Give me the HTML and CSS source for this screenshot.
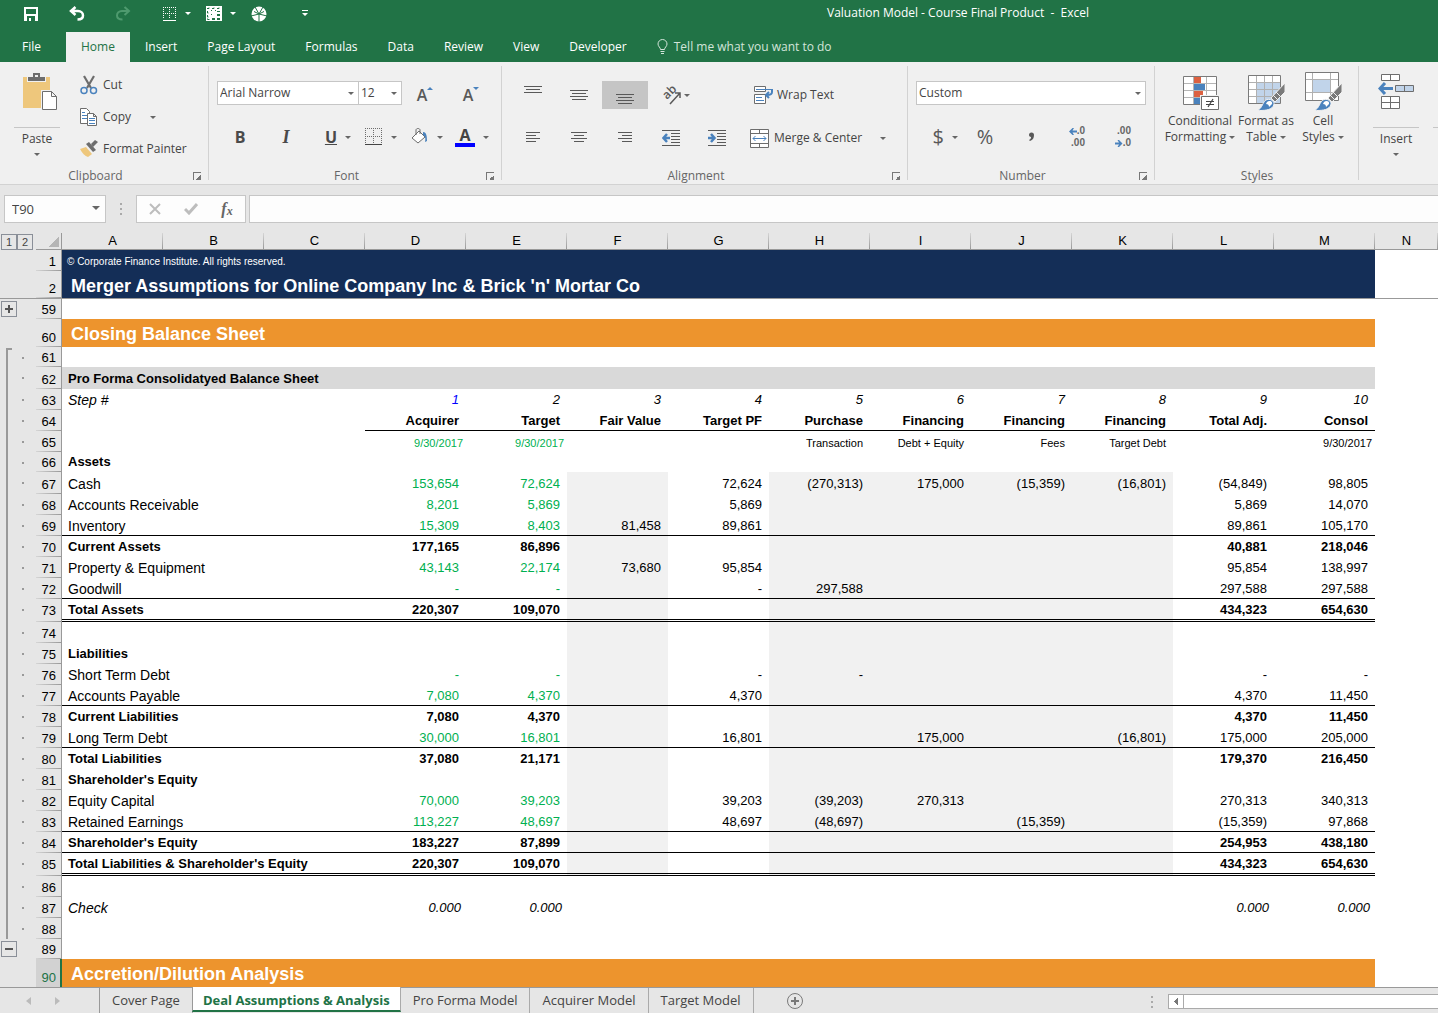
FILE: index.html
```
<!DOCTYPE html>
<html lang="en">

<head>
    <meta charset="UTF-8" />
    <meta name="viewport" content="width=device-width, initial-scale=1.0" />
    <title>Valuation Model - Course Final Product - Excel</title>
    <link rel="stylesheet" href="styles.css">
</head>

<body>
    <header class="titlebar">
        <div class="titlebar-top">
            <div class="quick-access">
                <button class="qa-btn" aria-label="Save">
                    <svg width="16" height="16" viewBox="0 0 16 16"><path fill="#fff" fill-rule="evenodd" d="M1 1h14v14H1zM3 3v5h10V3zM4 10v5h2v-3h2v3h4v-5z"/></svg>
                </button>
                <button class="qa-btn" aria-label="Undo">
                    <svg width="16" height="16" viewBox="0 0 16 16" fill="none" stroke="#fff" stroke-width="2.500"><path d="M6.500 1 2 5l4.500 4M2 5h7c3 0 5 2 5 4.500s-2 4-5.500 4"/></svg>
                </button>
                <button class="qa-btn" aria-label="Redo">
                    <svg width="16" height="16" viewBox="0 0 16 16" fill="none" stroke="#4e9a6e" stroke-width="2"><path d="m9.500 1 4.500 4-4.500 4M14 5H7C4 5 2 7 2 9.500s2 4 5.500 4"/></svg>
                </button>
                <button class="qa-btn qa-split" aria-label="Borders">
                    <svg width="14" height="14" viewBox="0 0 14 14" stroke="#fff" fill="none"><path stroke-dasharray="1 1" d="M0 .5h13M0 6.500h13M.5 0v12M6.500 0v12M12.500 0v12"/><path d="M0 13.500h13"/></svg>
                    <span class="caret caret-light"></span>
                </button>
                <button class="qa-btn qa-split" aria-label="Table">
                    <svg width="16" height="15" viewBox="0 0 16 15"><path fill="#fff" d="M0 0h16v15H0z"/><path fill="none" stroke="#217346" d="M1 2.500h2v-1M6 2.500h2v-1M11 2.500h2v-1M1.500 5v2h1M1.500 9v2h1M1.500 12.500v1h2"/><path fill="#217346" d="M6 12h3v2H6zM11 12h3v2h-3zM11 8h3v2h-3zM11 5h3v1h-3zM5 4h1v1H5zM9 4h1v1H9zM5 8h1v1H5z"/></svg>
                    <span class="caret caret-light"></span>
                </button>
                <button class="qa-btn" aria-label="Macros">
                    <svg width="16" height="16" viewBox="0 0 16 16"><circle cx="8" cy="8" r="7.500" fill="#fff"/><path fill="none" stroke="#217346" d="M8 8 4 1M8 8l4-7M8 8l8 2M8 8v8M8 8l-8 2M3 5.500l5 2.500 5-2.500"/></svg>
                </button>
                <button class="qa-btn" aria-label="Customize toolbar">
                    <svg width="7" height="7" viewBox="0 0 7 7" fill="#fff"><path d="M0 0h6v1H0zM0 3h6L3 6z"/></svg>
                </button>
            </div>
            <div class="window-title">Valuation Model - Course Final Product&nbsp; -&nbsp; Excel</div>
        </div>
        <nav class="ribbon-tabs">
            <a href="#" class="file-tab">File</a>
            <a href="#" class="active">Home</a>
            <a href="#">Insert</a>
            <a href="#">Page Layout</a>
            <a href="#">Formulas</a>
            <a href="#">Data</a>
            <a href="#">Review</a>
            <a href="#">View</a>
            <a href="#">Developer</a>
            <a href="#" class="tell-me">
                <svg width="11" height="15" viewBox="0 0 11 15" fill="none" stroke="#d3e5da"><path d="M3.500 10.500c0-2-2.500-3-2.500-5.500a4.500 4.500 0 0 1 9 0c0 2.500-2.500 3.500-2.500 5.500zM3.500 12.500h4M4 14.500h3"/></svg>
                Tell me what you want to do
            </a>
        </nav>
    </header>

    <div class="ribbon">
        <section class="group group-clipboard">
            <div class="group-body">
                <button class="big-btn paste-btn">
                    <svg width="36" height="40" viewBox="0 0 36 40"><path fill="#eec77c" d="M1 5h27v31H1z"/><path fill="#f0f0f0" d="M5 4h19v6H5z"/><path fill="#6d6d6d" d="M6 5h5V1h7v4h5v4H6z"/><path fill="#f0f0f0" d="M13 3h3v2h-3z"/><path fill="#fff" stroke="#f0f0f0" stroke-width="3" d="M20.500 19.500h9l5 5v13h-14z"/><path fill="#fff" stroke="#6d6d6d" d="M20.500 19.500h9l5 5v13h-14zM29.500 19.500v5h5"/></svg>
                    <span class="big-label">Paste</span>
                    <span class="caret"></span>
                </button>
                <div class="stack">
                    <button class="text-btn">
                        <svg width="18" height="20" viewBox="0 0 18 20" fill="none"><path stroke="#6d6d6d" stroke-width="2.200" d="m4 1 7 12M14 1 7 13"/><circle cx="4" cy="15.500" r="3" stroke="#4a82bd" stroke-width="1.500"/><circle cx="13.500" cy="15.500" r="3" stroke="#4a82bd" stroke-width="1.500"/></svg>
                        Cut
                    </button>
                    <button class="text-btn copy-btn">
                        <svg width="18" height="19" viewBox="0 0 18 19" fill="#fff" stroke="#6d6d6d"><path d="M.5.5h6l3 3v12h-9z"/><path stroke="#4a82bd" d="M2 4.500h3M2 7.500h5M2 10.500h5"/><path d="M7.500 5.500h6l3 3v9h-9zM13.500 5.500v3h3"/><path stroke="#4a82bd" d="M9 10.500h6M9 12.500h6M9 15.500h6"/></svg>
                        Copy
                        <span class="caret"></span>
                    </button>
                    <button class="text-btn">
                        <svg width="18" height="18" viewBox="0 0 18 18"><path fill="#eec77c" d="m0 9 6-2 6 7-4 3c-3-1-6-4-8-8z"/><path fill="#6d6d6d" d="m6 4 3-2 7 8-3 2z"/><path fill="#6d6d6d" d="m11 4 4-4 3 2-5 5z"/></svg>
                        Format Painter
                    </button>
                </div>
            </div>
            <div class="group-label">Clipboard<button class="launcher" aria-label="Clipboard settings"></button></div>
        </section>

        <section class="group group-font">
            <div class="group-body rows">
                <div class="row">
                    <label class="combo font-name"><select aria-label="Font"><option>Arial Narrow</option></select><span class="caret"></span></label>
                    <label class="combo font-size"><select aria-label="Font size"><option>12</option></select><span class="caret"></span></label>
                    <button class="tool size-btn" aria-label="Increase font size">
                        A<svg width="6" height="16" viewBox="0 0 6 16"><path fill="#4a82bd" d="M0 3h6L3 0z"/></svg>
                    </button>
                    <button class="tool size-btn" aria-label="Decrease font size">
                        A<svg width="6" height="16" viewBox="0 0 6 16"><path fill="#4a82bd" d="M0 0h6L3 3z"/></svg>
                    </button>
                </div>
                <div class="row">
                    <button class="tool letter">B</button>
                    <button class="tool letter italic">I</button>
                    <button class="tool split letter"><u>U</u><span class="caret"></span></button>
                    <button class="tool split" aria-label="Borders">
                        <svg width="18" height="18" viewBox="0 0 18 18" fill="none" stroke="#6d6d6d"><path stroke-dasharray="1 1" d="M0 .5h17M0 8.500h17M.5 0v16M8.500 0v16M16.500 0v16"/><path stroke="#444" d="M0 16.500h17"/></svg>
                        <span class="caret"></span>
                    </button>
                    <button class="tool split" aria-label="Fill color">
                        <svg width="18" height="18" viewBox="0 0 18 18"><path fill="#fff" stroke="#6d6d6d" d="m1 10 7-7 6 6-7 6z"/><path fill="none" stroke="#6d6d6d" d="M5 7V2c0-2 4-2 4 0v4"/><path fill="#4a82bd" d="M12 4c3 0 4 3 4 9l-2 1c1-4 0-6-2-7z"/></svg>
                        <span class="caret"></span>
                    </button>
                    <button class="tool split" aria-label="Font color">
                        <span class="font-color">A</span>
                        <span class="caret"></span>
                    </button>
                </div>
            </div>
            <div class="group-label">Font<button class="launcher" aria-label="Font settings"></button></div>
        </section>

        <section class="group group-alignment">
            <div class="group-body align-grid">
                <button class="tool" aria-label="Top align"><svg width="18" height="18" viewBox="0 0 18 18" stroke="#595959"><path d="M0 .5h18M2 3.500h14M0 6.500h18"/></svg></button>
                <button class="tool" aria-label="Middle align"><svg width="18" height="18" viewBox="0 0 18 18" stroke="#595959"><path d="M0 4.500h18M2 7.500h14M0 10.500h18M2 13.500h14"/></svg></button>
                <button class="tool selected" aria-label="Bottom align"><svg width="18" height="18" viewBox="0 0 18 18" stroke="#595959"><path d="M0 8.500h18M2 11.500h14M0 14.500h18M2 17.500h14"/></svg></button>
                <button class="tool split orientation" aria-label="Orientation">
                    <svg width="22" height="20" viewBox="0 0 22 20" fill="none" stroke="#595959" stroke-width="1.500"><text transform="translate(7 15) rotate(-45)" stroke="none">ab</text><path d="m10 19 10-11M15 8h5v5"/></svg>
                    <span class="caret"></span>
                </button>
                <button class="text-btn wrap-btn">
                    <svg width="20" height="19" viewBox="0 0 20 19"><path fill="#fff" stroke="#6d6d6d" d="M.5.500h11v5H.5zM.5 8.500h11v9H.5z"/><path fill="none" stroke="#4a82bd" d="M2 3.500h16M2 11.500h6M2 14.500h8"/><path fill="none" stroke="#4a82bd" stroke-width="2" d="M18 3v3c0 2-1 3-5 3M15 6l-3 3 3 3"/></svg>
                    Wrap Text
                </button>
                <button class="tool" aria-label="Align left"><svg width="16" height="12" viewBox="0 0 16 12" stroke="#595959"><path d="M1 .5h14M1 3.500h10M1 6.500h14M1 9.500h10"/></svg></button>
                <button class="tool" aria-label="Center"><svg width="16" height="12" viewBox="0 0 16 12" stroke="#595959"><path d="M0 .5h16M3 3.500h10M0 6.500h16M3 9.500h10"/></svg></button>
                <button class="tool" aria-label="Align right"><svg width="16" height="12" viewBox="0 0 16 12" stroke="#595959"><path d="M1 .5h14M5 3.500h10M1 6.500h14M5 9.500h10"/></svg></button>
                <button class="tool" aria-label="Decrease indent"><svg width="18" height="18" viewBox="0 0 18 18" fill="none" stroke="#595959"><path d="M0 1.500h18M9 4.500h9M9 7.500h9M9 10.500h9M9 13.500h9M0 16.500h18"/><path stroke="#4a82bd" stroke-width="2.500" d="M8 9H2M5 5 1.500 9 5 13"/></svg></button>
                <button class="tool" aria-label="Increase indent"><svg width="18" height="18" viewBox="0 0 18 18" fill="none" stroke="#595959"><path d="M0 1.500h18M9 4.500h9M9 7.500h9M9 10.500h9M9 13.500h9M0 16.500h18"/><path stroke="#4a82bd" stroke-width="2.500" d="M0 9h6M3 5l3.500 4L3 13"/></svg></button>
                <button class="text-btn merge-btn">
                    <svg width="19" height="19" viewBox="0 0 19 19" fill="#fff" stroke="#6d6d6d"><path d="M.5.500h18v18H.5zM.5 4.500h18M.5 14.500h18M9.500.500v4M9.500 14.500v4"/><path fill="none" stroke="#4a82bd" d="M3 9.500h13M5.500 7 3 9.500 5.500 12M13.500 7 16 9.500 13.500 12"/></svg>
                    Merge &amp; Center
                    <span class="caret"></span>
                </button>
            </div>
            <div class="group-label">Alignment<button class="launcher" aria-label="Alignment settings"></button></div>
        </section>

        <section class="group group-number">
            <div class="group-body rows">
                <div class="row">
                    <label class="combo number-format"><select aria-label="Number format"><option>Custom</option></select><span class="caret"></span></label>
                </div>
                <div class="row">
                    <button class="tool split sign">$<span class="caret"></span></button>
                    <button class="tool sign">%</button>
                    <button class="tool" aria-label="Comma style"><svg width="7" height="10" viewBox="0 0 7 10" fill="#595959"><path d="M1 3a2.500 2.500 0 0 1 5 0c0 3-1 5-4 6l-1-1c2-1 2-2 2-3-1 0-2-1-2-2z"/></svg></button>
                    <button class="tool decimals">
                        <span><svg width="8" height="7" viewBox="0 0 8 7"><path fill="#4a82bd" d="M0 3.500 3.500 0H5L3.500 2.500H8v2H3.500L5 7H3.500z"/></svg>.0</span>
                        <span>.00</span>
                    </button>
                    <button class="tool decimals">
                        <span>.00</span>
                        <span><svg width="8" height="7" viewBox="0 0 8 7"><path fill="#4a82bd" d="M7.500 3.500 4 0H2.500L4 2.500H0v2h4L2.500 7H4z"/></svg>.0</span>
                    </button>
                </div>
            </div>
            <div class="group-label">Number<button class="launcher" aria-label="Number settings"></button></div>
        </section>

        <section class="group group-styles">
            <div class="group-body">
                <button class="style-btn">
                    <svg width="38" height="40" viewBox="0 0 38 40"><path fill="#fff" stroke="#7a7a7a" d="M2.500 4.500h33v28h-33z"/><path stroke="#b5b5b5" d="M3 11.500h32M3 18.500h32M3 25.500h32M12.500 5v27M25.500 5v27"/><path fill="#dc6141" d="M13 5h7v6h-7zM13 19h9v6h-9z"/><path fill="#4a82bd" d="M13 12h11v6H13zM13 26h6v6h-6z"/><path fill="#fff" stroke="#f0f0f0" stroke-width="3" d="M20.500 24.500h17v13h-17z"/><path fill="#fff" stroke="#6d6d6d" d="M20.500 24.500h17v13h-17z"/><path stroke="#444" stroke-width="1.200" d="M25 29.500h8M25 32.500h8M32 27l-5 8"/></svg>
                    <span>Conditional</span>
                    <span>Formatting <i class="caret"></i></span>
                </button>
                <button class="style-btn">
                    <svg width="38" height="40" viewBox="0 0 38 40"><path fill="#fff" stroke="#7a7a7a" d="M1.500 3.500h32v28h-32z"/><path fill="#c1d4ea" d="M10 10h23v21H10z"/><path stroke="#b0b0b0" d="M2 10.500h31M2 17.500h31M2 24.500h31M9.500 4v27M17.500 4v27M25.500 4v27"/><path fill="#7a7a7a" stroke="#f0f0f0" d="M38 11v9L28 30l-4-4z"/><path stroke="#f0f0f0" d="m29 20 5 5M26 23l5 5"/><path fill="#4a82bd" stroke="#f0f0f0" d="M10 38.500c6-2 5-9 10-11 5-1 9 3 6 7-3 4-9 4-16 4z"/><path fill="#fff" d="M20 30c2-2 6-1 5 2l-3 3c0-2-1-3-3-3z"/></svg>
                    <span>Format as</span>
                    <span>Table <i class="caret"></i></span>
                </button>
                <button class="style-btn">
                    <svg width="38" height="40" viewBox="0 0 38 40"><path fill="#fff" stroke="#7a7a7a" d="M1.500.500h33v28h-33z"/><path stroke="#b0b0b0" d="M2 7.500h32M2 20.500h32M8.500 1v27M26.500 1v27"/><path fill="#c1d4ea" d="M9 8h17v12H9z"/><path fill="#7a7a7a" stroke="#f0f0f0" d="M38 11v9L28 30l-4-4z"/><path stroke="#f0f0f0" d="m29 20 5 5M26 23l5 5"/><path fill="#4a82bd" stroke="#f0f0f0" d="M10 38.500c6-2 5-9 10-11 5-1 9 3 6 7-3 4-9 4-16 4z"/><path fill="#fff" d="M20 30c2-2 6-1 5 2l-3 3c0-2-1-3-3-3z"/></svg>
                    <span>Cell</span>
                    <span>Styles <i class="caret"></i></span>
                </button>
            </div>
            <div class="group-label">Styles</div>
        </section>

        <section class="group group-cells">
            <div class="group-body">
                <button class="big-btn">
                    <svg width="36" height="40" viewBox="0 0 36 40" fill="#fff" stroke="#6d6d6d"><path d="M3.500 2.500h18v6h-18zM12.500 2.500v6M3.500 24.500h18v12h-18zM12.500 24.500v12M3.500 30.500h18"/><path fill="#c1d4ea" d="M17.500 13.500h18v6h-18zM26.500 13.500v6"/><path fill="none" stroke="#4a82bd" stroke-width="3" d="M15 16.500H3M7 11l-5 5.500L7 22"/></svg>
                    <span class="big-label">Insert</span>
                    <span class="caret"></span>
                </button>
                <div class="next-btn"></div>
            </div>
        </section>
    </div>

    <div class="formula-bar">
        <label class="name-box"><input type="text" value="T90" aria-label="Name box"><span class="caret"></span></label>
        <span class="grip"></span>
        <div class="formula-tools">
            <button aria-label="Cancel"><svg width="12" height="12" viewBox="0 0 12 12" stroke="#bdbdbd" stroke-width="2"><path d="m1 1 10 10M11 1 1 11"/></svg></button>
            <button aria-label="Enter"><svg width="14" height="12" viewBox="0 0 14 12" fill="none" stroke="#bdbdbd" stroke-width="3"><path d="m1 6 4 4 8-9"/></svg></button>
            <button class="fx">f<small>x</small></button>
        </div>
        <input class="formula-input" type="text" aria-label="Formula">
    </div>

    <main class="sheet">
        <table class="grid">
            <colgroup>
                <col class="col-gutter">
                <col class="col-gutter">
                <col class="col-num">
                <col class="col-data" span="13">
                <col>
            </colgroup>
            <thead>
                <tr id="letters">
                    <td class="level"><button>1</button></td>
                    <td class="level"><button>2</button></td>
                    <td class="corner"></td>
                </tr>
            </thead>
            <tbody id="rows"></tbody>
        </table>
    </main>

    <footer class="sheet-tabs">
        <div class="sheet-nav">
            <button class="nav-prev" aria-label="Previous sheet"></button>
            <button class="nav-next" aria-label="Next sheet"></button>
        </div>
        <nav>
            <a href="#">Cover Page</a>
            <a href="#" class="active">Deal Assumptions &amp; Analysis</a>
            <a href="#">Pro Forma Model</a>
            <a href="#">Acquirer Model</a>
            <a href="#">Target Model</a>
        </nav>
        <button class="add-sheet" aria-label="New sheet">
            <svg width="16" height="16" viewBox="0 0 16 16" fill="none" stroke="#7a7a7a"><circle cx="8" cy="8" r="7.500"/><path stroke-width="2" d="M8 4v8M4 8h8"/></svg>
        </button>
        <span class="grip"></span>
        <div class="scrollbar"><button class="scroll-left" aria-label="Scroll left"></button></div>
    </footer>

    <script src="script.js"></script>
</body>

</html>
```
FILE: styles.css
```
* {
    box-sizing: border-box;
}

body {
    margin: 0;
    min-height: 100vh;
    display: flex;
    flex-direction: column;
    font-family: "Open Sans", "Noto Sans", sans-serif;
    font-size: 12px;
    line-height: 16px;
    color: #444;
    background: #e6e6e6;
    overflow: hidden;
}

button,
select,
input {
    font: inherit;
    color: inherit;
    background: none;
    border: none;
    padding: 0;
    margin: 0;
    outline: none;
    appearance: none;
    border-radius: 0;
}

a {
    color: inherit;
    text-decoration: none;
}

svg {
    display: block;
    flex-shrink: 0;
}

.caret {
    display: inline-block;
    flex-shrink: 0;
    border: 3px solid transparent;
    border-top-color: #666;
    border-bottom: none;
}

.caret-light {
    border-top-color: #fff;
}

/* Title bar */
.titlebar {
    background: #217346;
    color: #fff;
}

.titlebar-top {
    display: flex;
    height: 32px;
}

.quick-access {
    display: flex;
    align-items: center;
    width: 478px;
    height: 27px;
    padding-left: 8px;
}

.qa-btn {
    display: flex;
    justify-content: center;
    align-items: center;
    width: 46px;
}

.qa-split {
    justify-content: flex-end;
    gap: 8px;
    width: 45px;
}

.window-title {
    flex: 1;
    text-align: center;
    padding-top: 5px;
}

.ribbon-tabs {
    display: flex;
    height: 30px;
}

.ribbon-tabs a {
    padding: 7px 15px;
}

.ribbon-tabs .file-tab {
    width: 66px;
    padding-left: 22px;
}

.ribbon-tabs .active {
    background: #f0f0f0;
    color: #217346;
}

.ribbon-tabs .tell-me {
    display: flex;
    gap: 6px;
    color: #d3e5da;
}

/* Ribbon */
.ribbon {
    display: flex;
    height: 123px;
    background: #f0f0f0;
    border-bottom: 1px solid #d2d2d2;
}

.group {
    position: relative;
    flex-shrink: 0;
    display: flex;
    flex-direction: column;
    padding: 0 8px;
}

.group::after {
    content: "";
    position: absolute;
    right: 0;
    top: 4px;
    bottom: 4px;
    width: 1px;
    background: #d2d2d2;
}

.group-clipboard {
    width: 209px;
}

.group-font {
    width: 293px;
}

.group-alignment {
    width: 406px;
}

.group-number {
    width: 247px;
}

.group-styles {
    width: 204px;
}

.group-cells {
    flex: 1;
    overflow: hidden;
    padding-right: 0;
}

.group-cells::after {
    display: none;
}

.group-body {
    display: flex;
    height: 106px;
}

.group-label {
    display: flex;
    justify-content: center;
    color: #666;
    padding-right: 18px;
}

.group-styles .group-label {
    padding-right: 0;
}

.launcher {
    position: absolute;
    right: 8px;
    bottom: 4px;
    width: 8px;
    height: 8px;
    border-left: 1px solid #777;
    border-top: 1px solid #777;
    background: linear-gradient(135deg, transparent 50%, #777 50%) right bottom / 5px 5px no-repeat;
}

.big-btn {
    display: flex;
    flex-direction: column;
    align-items: center;
    width: 46px;
    margin-left: 6px;
    padding-top: 10px;
    flex-shrink: 0;
}

.paste-btn svg {
    margin-left: 6px;
}

.big-label {
    width: 46px;
    margin-top: 15px;
    padding: 3px 0 6px;
    border-top: 1px solid #c6c6c6;
}

.next-btn {
    flex: 1;
    margin-left: 14px;
    margin-top: 65px;
    border-top: 1px solid #c6c6c6;
}

.stack {
    display: flex;
    flex-direction: column;
    margin-left: 20px;
    padding-top: 7px;
}

.text-btn {
    display: flex;
    align-items: center;
    gap: 5px;
    height: 32px;
    white-space: nowrap;
}

.copy-btn .caret {
    margin-left: 14px;
}

.rows {
    flex-direction: column;
    gap: 16px;
    padding-top: 19px;
}

.row {
    display: flex;
    height: 26px;
}

.combo {
    position: relative;
    height: 24px;
    background: #fff;
    border: 1px solid #c6c6c6;
}

.combo select {
    width: 100%;
    height: 22px;
    padding: 0 2px;
}

.combo .caret,
.name-box .caret {
    position: absolute;
    right: 4px;
    top: 10px;
}

.font-name {
    width: 142px;
}

.font-size {
    width: 43px;
    border-left: none;
}

.number-format {
    width: 230px;
}

.tool {
    display: flex;
    justify-content: center;
    align-items: center;
    width: 46px;
    height: 28px;
}

.split {
    justify-content: flex-end;
    gap: 8px;
    padding-right: 4px;
}

.selected {
    background: #c5c5c5;
}

.letter {
    font-size: 16px;
    font-weight: bold;
    color: #4a4a4a;
}

.size-btn {
    font-size: 16px;
    font-weight: 600;
    color: #595959;
}

.font-color {
    width: 20px;
    font-size: 16px;
    font-weight: bold;
    text-align: center;
    border-bottom: 4px solid #00f;
}

.italic {
    font-family: "Liberation Serif", serif;
    font-style: italic;
    font-size: 18px;
}

.align-grid {
    display: grid;
    grid-template-columns: repeat(5, 46px) 1fr;
    grid-template-rows: 28px 28px;
    row-gap: 15px;
    align-content: start;
    padding-top: 19px;
}

.align-grid .split {
    gap: 2px;
}

.orientation svg {
    overflow: visible;
}

.orientation text {
    font-size: 12px;
    font-weight: 600;
    fill: #595959;
}

.align-grid .text-btn {
    height: 28px;
}

.wrap-btn {
    grid-column: 6;
    padding-left: 14px;
}

.align-grid .wrap-btn {
    gap: 3px;
}

.merge-btn {
    padding-left: 10px;
}

.merge-btn .caret {
    margin-left: 13px;
}

.sign {
    font-size: 20px;
    color: #595959;
}

.decimals {
    flex-direction: column;
    align-items: flex-end;
    padding-right: 15px;
    font-family: "Liberation Sans", sans-serif;
    font-size: 10px;
    line-height: 12px;
    font-weight: bold;
    color: #666;
}

.decimals span {
    display: flex;
    align-items: center;
}

.style-btn {
    display: flex;
    flex-direction: column;
    align-items: center;
    width: 74px;
    padding-top: 10px;
    white-space: nowrap;
}

.style-btn svg {
    margin-bottom: 1px;
}

.style-btn:nth-child(2) {
    width: 58px;
}

.style-btn:nth-child(3) {
    width: 56px;
}

.style-btn .caret {
    vertical-align: middle;
}

/* Formula bar */
.formula-bar {
    display: flex;
    height: 48px;
    padding: 10px 0 0 4px;
}

.name-box,
.formula-tools,
.formula-input {
    height: 28px;
    background: #fdfdfd;
    border: 1px solid #c6c6c6;
}

.name-box {
    position: relative;
    width: 102px;
}

.name-box input {
    width: 70px;
    height: 26px;
    padding-left: 7px;
    font-size: 13px;
}

.name-box .caret {
    right: 5px;
    border-width: 4px 4px 0;
}

.grip {
    width: 2px;
    height: 12px;
    margin: 8px 14px;
    background: repeating-linear-gradient(#aaa 0 2px, transparent 2px 5px);
}

.formula-tools {
    display: flex;
    width: 110px;
}

.formula-tools button {
    flex: 1;
    display: flex;
    justify-content: center;
    align-items: center;
}

.formula-tools .fx {
    font-family: "Liberation Serif", serif;
    font-style: italic;
    font-weight: bold;
    font-size: 16px;
    color: #666;
}

.fx small {
    font-size: 12px;
    padding-top: 4px;
}

.formula-input {
    flex: 1;
    margin-left: 3px;
    border-right: none;
}

/* Sheet */
.sheet {
    flex: 1;
    overflow: hidden;
    background: #fff;
}

.grid {
    width: 100%;
    table-layout: fixed;
    border-spacing: 0;
    font-family: "Arial Narrow", "Liberation Sans", sans-serif;
    font-size: 13px;
    line-height: 20px;
    color: #000;
}

.grid td,
.grid th {
    padding: 0;
    font-weight: inherit;
    white-space: nowrap;
    vertical-align: bottom;
}

.col-gutter {
    width: 18px;
}

.col-num {
    width: 26px;
}

.col-data {
    width: 101px;
}

.grid thead td,
.grid thead th {
    height: 17px;
    line-height: 16px;
    background: #e6e6e6;
}

.grid thead th {
    text-align: center;
    border-bottom: 1px solid #999;
    background: linear-gradient(#d5d5d5, #999) right / 1px 100% no-repeat #e6e6e6;
}

.grid thead .corner {
    background: linear-gradient(135deg, transparent 50%, #b5b5b5 50%) 13px 4px / 10px 10px no-repeat #e6e6e6;
    border-right: 1px solid #999;
    border-bottom: 1px solid #999;
}

.grid .level button {
    display: block;
    width: 16px;
    height: 16px;
    margin-left: 1px;
    border: 1px solid #8a8f98;
    font-size: 11px;
    line-height: 14px;
    color: #444;
}

.grid .level + .level button {
    margin-left: -1px;
}

.grid .gutter {
    background-color: #e6e6e6;
    background-repeat: no-repeat;
    vertical-align: top;
}

.toggle {
    display: block;
    width: 16px;
    height: 16px;
    margin: 2px 0 0 1px;
    border: 1px solid #8a8f98;
    background: linear-gradient(#555, #555) center / 8px 2px no-repeat;
}

.toggle.plus {
    background: linear-gradient(#555, #555) center / 8px 2px no-repeat, linear-gradient(#555, #555) center / 2px 8px no-repeat;
}

/* bracket that spans the grouped rows */
.bracket {
    background-image: linear-gradient(#999, #999);
    background-position: 6px 0;
    background-size: 2px 100%;
}

.bracket-start {
    background-image: linear-gradient(#999, #999), linear-gradient(#999, #999);
    background-position: 6px 1px;
    background-size: 2px 100%, 6px 2px;
}

.dot {
    background-image: linear-gradient(#999, #999);
    background-position: 4px 10px;
    background-size: 2px 2px;
}

.grid .num {
    font-style: normal;
    font-weight: normal;
    line-height: 18px;
    text-align: right;
    padding-right: 5px;
    border-right: 1px solid #999;
    background: linear-gradient(to right, #d5d5d5, #999) bottom / 100% 1px no-repeat #e6e6e6;
}

.grid .label {
    padding-left: 6px;
    text-align: left;
    font-size: 14px;
}

.grid .val {
    text-align: right;
    padding-right: 7px;
}

.h20 { height: 20px; }
.h21 { height: 21px; }
.h22 { height: 22px; }
.h23 { height: 23px; }
.h28 { height: 28px; }

.bold {
    font-weight: bold;
}

.grid .bold .label {
    font-size: 13px;
}

.step {
    font-style: italic;
}

.linked .val:nth-child(5),
.linked .val:nth-child(6),
.dates .val:nth-child(5),
.dates .val:nth-child(6) {
    color: #00b050;
}

.step .val:nth-child(5) {
    color: #00f;
}

.check .val:nth-child(5) {
    color: #000;
}

.shaded .val:nth-child(7),
.shaded .val:nth-child(n+9):nth-child(-n+12) {
    background: #f1f1f1;
}

.under .label,
.under .val,
.heads .val {
    border-bottom: 1px solid #000;
    line-height: 18px;
}

.double .label,
.double .val {
    border-bottom: 3px double #000;
    line-height: 18px;
}

.grid .double .num {
    line-height: 22px;
}

.dates .val {
    font-size: 11px;
    line-height: 18px;
}

.grid .dates .val:nth-child(5),
.grid .dates .val:nth-child(6),
.grid .dates .val:nth-child(14) {
    padding-right: 3px;
}

.grid .check .val {
    padding-right: 5px;
}

.notice .label,
.title .label {
    background: #142e57;
    color: #fff;
}

.grid .notice .label {
    padding-left: 5px;
    font-size: 10px;
    line-height: 18px;
}

.title td {
    border-bottom: 1px solid #999;
}

.grid .title .label,
.grid .section .label {
    padding-left: 9px;
    font-size: 18px;
    font-weight: bold;
    line-height: 24px;
}

.grid .section .label {
    background: #ed942d;
    color: #fff;
    line-height: 26px;
}

.grid .subhead .label {
    background: #d9d9d9;
    font-size: 13px;
    font-weight: bold;
}

.grid .current .num {
    background: #d2d2d2;
    color: #217346;
    padding-right: 4px;
    border-right: 2px solid #217346;
}

/* Sheet tabs */
.sheet-tabs {
    display: flex;
    height: 26px;
    font-size: 13px;
    border-top: 1px solid #999;
    background: #e6e6e6;
}

.sheet-nav {
    display: flex;
    justify-content: center;
    align-items: center;
    gap: 24px;
    width: 99px;
    padding-right: 14px;
}

.nav-prev,
.nav-next {
    border: 4px solid transparent;
}

.nav-prev {
    border-right: 5px solid #bbb;
    border-left: none;
}

.nav-next {
    border-left: 5px solid #bbb;
    border-right: none;
}

.sheet-tabs nav {
    display: flex;
    border-left: 1px solid #999;
}

.sheet-tabs nav a {
    padding: 4px 12px;
    border-right: 1px solid #aaa;
}

.sheet-tabs nav .active {
    margin: -1px 0 1px -1px;
    padding: 5px 10px 0;
    background: #fff;
    border-left: 1px solid #999;
    border-bottom: 2px solid #217346;
    color: #217346;
    font-weight: bold;
}

.add-sheet {
    margin-left: 33px;
}

.sheet-tabs .grip {
    margin-left: auto;
    margin-right: 15px;
}

.scrollbar {
    width: 270px;
    height: 15px;
    margin-top: 6px;
    background: #fff;
    border: 1px solid #aaa;
    border-right: none;
}

.scroll-left {
    display: block;
    width: 15px;
    height: 13px;
    border-right: 1px solid #aaa;
    background: conic-gradient(from 45deg at 5px 50%, #777 90deg, transparent 0) 0 2px / 9px 9px no-repeat;
}
```
FILE: script.js
```
const columns = ["A", "B", "C", "D", "E", "F", "G", "H", "I", "J", "K", "L", "M", "N"];

// row number, height, classes, label, values for columns D to M
const rows = [
    [1, 21, "notice", "© Corporate Finance Institute. All rights reserved."],
    [2, 28, "title", "Merger Assumptions for Online Company Inc & Brick 'n' Mortar Co"],
    [59, 20, "", "", []],
    [60, 28, "section", "Closing Balance Sheet"],
    [61, 20, "", "", []],
    [62, 22, "subhead", "Pro Forma Consolidatyed Balance Sheet"],
    [63, 21, "step", "Step #", [1, 2, 3, 4, 5, 6, 7, 8, 9, 10]],
    [64, 21, "heads bold", "", ["Acquirer", "Target", "Fair Value", "Target PF", "Purchase", "Financing", "Financing", "Financing", "Total Adj.", "Consol"]],
    [65, 21, "dates", "", ["9/30/2017", "9/30/2017", "", "", "Transaction", "Debt + Equity", "Fees", "Target Debt", "", "9/30/2017"]],
    [66, 20, "bold", "Assets", []],
    [67, 22, "linked shaded", "Cash", ["153,654", "72,624", "", "72,624", "(270,313)", "175,000", "(15,359)", "(16,801)", "(54,849)", "98,805"]],
    [68, 21, "linked shaded", "Accounts Receivable", ["8,201", "5,869", "", "5,869", "", "", "", "", "5,869", "14,070"]],
    [69, 21, "linked shaded under", "Inventory", ["15,309", "8,403", "81,458", "89,861", "", "", "", "", "89,861", "105,170"]],
    [70, 21, "bold shaded", "Current Assets", ["177,165", "86,896", "", "", "", "", "", "", "40,881", "218,046"]],
    [71, 21, "linked shaded", "Property & Equipment", ["43,143", "22,174", "73,680", "95,854", "", "", "", "", "95,854", "138,997"]],
    [72, 21, "linked shaded under", "Goodwill", ["-", "-", "", "-", "297,588", "", "", "", "297,588", "297,588"]],
    [73, 23, "bold shaded double", "Total Assets", ["220,307", "109,070", "", "", "", "", "", "", "434,323", "654,630"]],
    [74, 21, "shaded", "", []],
    [75, 21, "bold shaded", "Liabilities", []],
    [76, 21, "linked shaded", "Short Term Debt", ["-", "-", "", "-", "-", "", "", "", "-", "-"]],
    [77, 21, "linked shaded under", "Accounts Payable", ["7,080", "4,370", "", "4,370", "", "", "", "", "4,370", "11,450"]],
    [78, 21, "bold shaded", "Current Liabilities", ["7,080", "4,370", "", "", "", "", "", "", "4,370", "11,450"]],
    [79, 21, "linked shaded under", "Long Term Debt", ["30,000", "16,801", "", "16,801", "", "175,000", "", "(16,801)", "175,000", "205,000"]],
    [80, 21, "bold shaded", "Total Liabilities", ["37,080", "21,171", "", "", "", "", "", "", "179,370", "216,450"]],
    [81, 21, "bold shaded", "Shareholder's Equity", []],
    [82, 21, "linked shaded", "Equity Capital", ["70,000", "39,203", "", "39,203", "(39,203)", "270,313", "", "", "270,313", "340,313"]],
    [83, 21, "linked shaded under", "Retained Earnings", ["113,227", "48,697", "", "48,697", "(48,697)", "", "(15,359)", "", "(15,359)", "97,868"]],
    [84, 21, "bold shaded under", "Shareholder's Equity", ["183,227", "87,899", "", "", "", "", "", "", "254,953", "438,180"]],
    [85, 23, "bold shaded double", "Total Liabilities & Shareholder's Equity", ["220,307", "109,070", "", "", "", "", "", "", "434,323", "654,630"]],
    [86, 21, "", "", []],
    [87, 21, "step check", "Check", ["0.000", "0.000", "", "", "", "", "", "", "0.000", "0.000"]],
    [88, 21, "", "", []],
    [89, 20, "", "", []],
    [90, 28, "section current", "Accretion/Dilution Analysis"]
];

function addCell(tr, className, text = "", span = 1) {
    const td = document.createElement("td");
    td.className = className;
    td.textContent = text;
    td.colSpan = span;
    tr.appendChild(td);
    return td;
}

// Outline gutter: toggles, bracket and dots
function addGutter(tr, n) {
    const grouped = n >= 61 && n <= 88;
    const first = addCell(tr, "gutter" + (grouped ? (n === 61 ? " bracket-start" : " bracket") : ""));
    addCell(tr, "gutter" + (grouped ? " dot" : ""));

    if (n === 59 || n === 89) {
        const toggle = document.createElement("button");
        toggle.className = n === 59 ? "toggle plus" : "toggle";
        toggle.setAttribute("aria-label", n === 59 ? "Expand" : "Collapse");
        first.appendChild(toggle);
    }
}

const letters = document.getElementById("letters");
columns.forEach(letter => {
    const th = document.createElement("th");
    th.textContent = letter;
    letters.appendChild(th);
});

const body = document.getElementById("rows");
rows.forEach(([n, height, classes, label, values]) => {
    const tr = document.createElement("tr");
    tr.className = `h${height} ${classes}`;
    addGutter(tr, n);
    addCell(tr, "num", n);

    if (values) {
        // the label spills over A to C
        addCell(tr, "label", label, 3);
        for (let i = 0; i < 10; i++) {
            addCell(tr, "val", values[i] ?? "");
        }
    } else {
        addCell(tr, "label", label, 13);
    }
    addCell(tr, "rest");
    body.appendChild(tr);
});
```
